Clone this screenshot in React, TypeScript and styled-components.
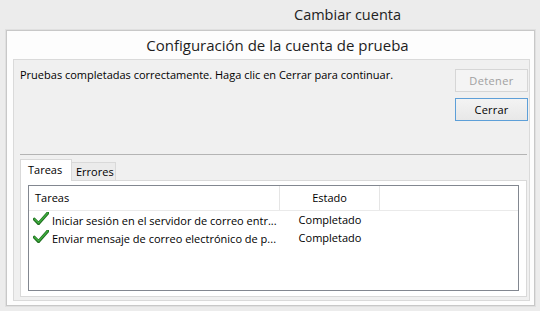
import React from "react";
import styled, { createGlobalStyle } from "styled-components";

const Global = createGlobalStyle`
  html, body { margin: 0; padding: 0; background: #ececec; }
  body {
    font-family: "Open Sans", "Noto Sans", sans-serif;
    font-size: 11px;
    color: #111;
  }
`;

const Window = styled.div`
  width: 540px;
  height: 311px;
  display: flex;
  flex-direction: column;
  overflow: hidden;
  background: #ececec;
`;

const TitleBar = styled.div`
  height: 30px;
  line-height: 30px;
  padding-left: 294px;
  font-size: 14.5px;
  color: #222;
  flex: none;
`;

const Dialog = styled.div`
  flex: 1;
  margin: 0 5px 5px 6px;
  border: 1px solid #c8c8c8;
  box-shadow: 0 0 0 1px #e0e0e0;
  background: #fdfdfd;
  display: flex;
  flex-direction: column;
  min-height: 0;
`;

const DialogHeader = styled.div`
  height: 28px;
  line-height: 29px;
  padding-left: 14px;
  text-align: center;
  font-size: 15px;
  color: #1e1e1e;
  flex: none;
`;

const Panel = styled.div`
  flex: 1;
  margin: 0 4px 4px 6px;
  border: 1px solid #dadada;
  background: #f0f0f0;
  padding: 0 1px 3px 6px;
  display: flex;
  flex-direction: column;
  min-height: 0;
`;

const TopRow = styled.div`
  display: flex;
  justify-content: space-between;
  align-items: flex-start;
  flex: none;
`;

const Message = styled.div`
  padding-top: 7px;
  line-height: 16px;
  color: #000;
`;

const ButtonColumn = styled.div`
  padding-top: 9px;
  display: flex;
  flex-direction: column;
  gap: 6px;
`;

const Button = styled.button<{ $disabled?: boolean; $default?: boolean }>`
  width: 73px;
  height: 23px;
  margin: 0;
  padding: 0;
  font-family: inherit;
  font-size: 11px;
  border: 1px solid ${(p) => (p.$default ? "#5d9fd8" : p.$disabled ? "#d6d6d6" : "#adadad")};
  background: ${(p) => (p.$disabled ? "#f4f4f4" : "linear-gradient(#f3f3f3, #e8e8e8)")};
  color: ${(p) => (p.$disabled ? "#a0a0a0" : "#000")};
  letter-spacing: ${(p) => (p.$disabled ? "0.4px" : "0.2px")};
`;

const Separator = styled.div`
  flex: none;
  margin: 33px 1px 0 0;
  border-top: 1px solid #b4b4b4;
`;

const TabStrip = styled.div`
  flex: none;
  margin-top: 4px;
  height: 21px;
  display: flex;
  align-items: flex-end;
  position: relative;
  z-index: 1;
`;

const Tab = styled.div<{ $active?: boolean }>`
  box-sizing: border-box;
  height: ${(p) => (p.$active ? "22px" : "18px")};
  margin-bottom: ${(p) => (p.$active ? "-1px" : "0")};
  width: ${(p) => (p.$active ? "52px" : "44px")};
  padding-left: ${(p) => (p.$active ? "7px" : "4px")};
  line-height: ${(p) => (p.$active ? "19px" : "18px")};
  border: 1px solid #d9d9d9;
  border-bottom: none;
  border-left: ${(p) => (p.$active ? "1px solid #d9d9d9" : "none")};
  background: ${(p) => (p.$active ? "#fff" : "#ebebeb")};
  color: #000;
`;

const TabPanel = styled.div`
  flex: 1;
  margin-right: 1px;
  border: 1px solid #d9d9d9;
  background: #fff;
  padding: 4px 7px 5px 7px;
  display: flex;
  min-height: 0;
`;

const List = styled.div`
  flex: 1;
  border: 1px solid #828790;
  background: #fff;
  display: flex;
  flex-direction: column;
`;

const HeaderRow = styled.div`
  display: grid;
  grid-template-columns: 251px 100px 1fr;
  height: 24px;
  border-bottom: 1px solid #eaeaea;
`;

const HeaderCell = styled.div<{ $center?: boolean }>`
  line-height: 24px;
  padding-left: ${(p) => (p.$center ? "0" : "6px")};
  text-align: ${(p) => (p.$center ? "center" : "left")};
  border-right: 1px solid #e5e5e5;
  color: #000;
  &:last-child { border-right: none; }
`;

const Row = styled.div`
  display: grid;
  grid-template-columns: 251px 100px 1fr;
  height: 18px;
`;

const TaskCell = styled.div`
  display: flex;
  align-items: center;
  gap: 3px;
  padding-left: 4px;
  white-space: nowrap;
  overflow: hidden;
  color: #000;
`;

const StatusCell = styled.div`
  text-align: center;
  line-height: 18px;
  color: #000;
`;

const Check = () => (
  <svg width="16" height="13" viewBox="0 0 16 13" style={{ flex: "none", marginTop: "-3px" }}>
    <path d="M1.3 7.2 L5.6 11.6 L15 0.8" fill="none" stroke="#1f6e1f" strokeWidth="3" strokeLinecap="round" strokeLinejoin="round" />
    <path d="M1.6 7.3 L5.6 11.1 L14.7 1.0" fill="none" stroke="#3fae3f" strokeWidth="1.4" strokeLinecap="round" strokeLinejoin="round" />
  </svg>
);

const tasks = [
  { name: "Iniciar sesión en el servidor de correo entr...", status: "Completado" },
  { name: "Enviar mensaje de correo electrónico de p...", status: "Completado" },
];

export default function App() {
  return (
    <>
      <Global />
      <Window>
        <TitleBar>Cambiar cuenta</TitleBar>
        <Dialog>
          <DialogHeader>Configuración de la cuenta de prueba</DialogHeader>
          <Panel>
            <TopRow>
              <Message>Pruebas completadas correctamente. Haga clic en Cerrar para continuar.</Message>
              <ButtonColumn>
                <Button $disabled disabled>Detener</Button>
                <Button $default>Cerrar</Button>
              </ButtonColumn>
            </TopRow>
            <Separator />
            <TabStrip>
              <Tab $active>Tareas</Tab>
              <Tab>Errores</Tab>
            </TabStrip>
            <TabPanel>
              <List>
                <HeaderRow>
                  <HeaderCell>Tareas</HeaderCell>
                  <HeaderCell $center>Estado</HeaderCell>
                  <HeaderCell />
                </HeaderRow>
                {tasks.map((t) => (
                  <Row key={t.name}>
                    <TaskCell>
                      <Check />
                      <span>{t.name}</span>
                    </TaskCell>
                    <StatusCell>{t.status}</StatusCell>
                    <div />
                  </Row>
                ))}
              </List>
            </TabPanel>
          </Panel>
        </Dialog>
      </Window>
    </>
  );
}
